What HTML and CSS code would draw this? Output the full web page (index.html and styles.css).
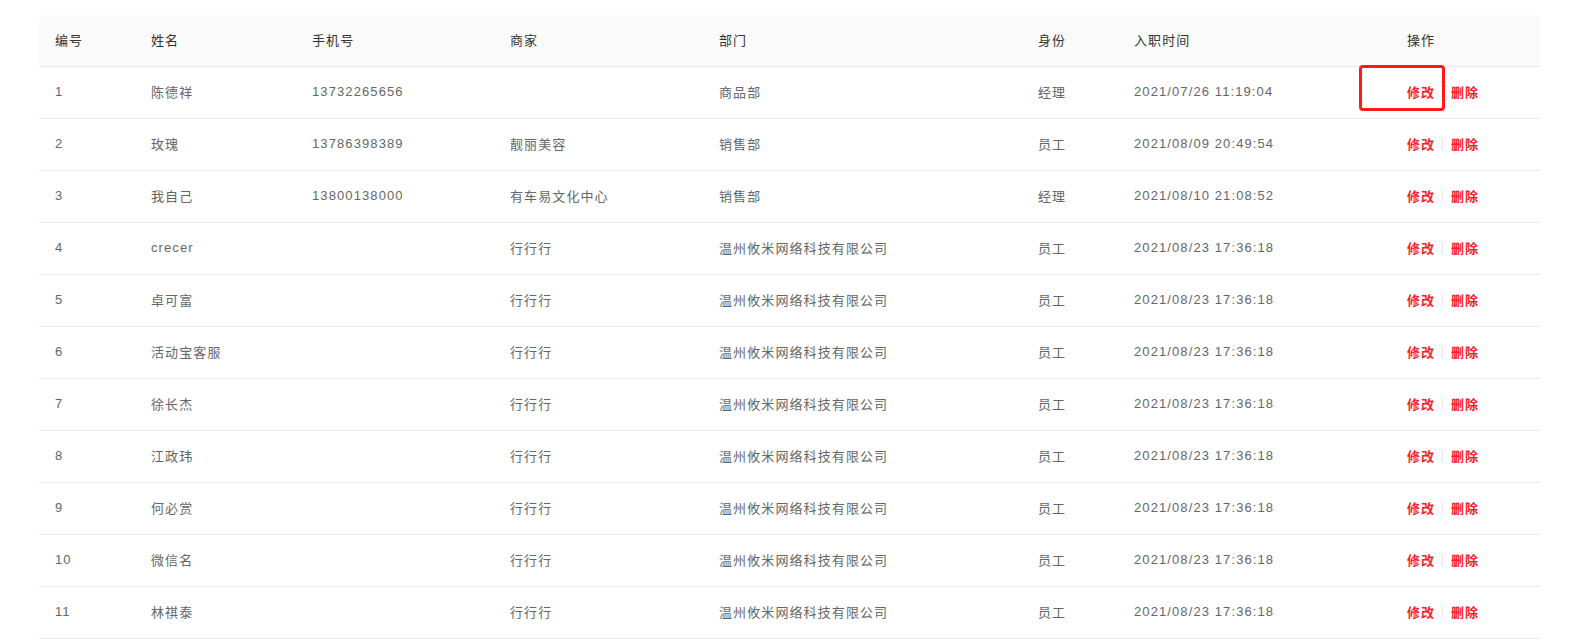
FILE: index.html
```html
<!DOCTYPE html>
<html lang="zh">
<head>
    <meta charset="UTF-8" />
    <title>员工列表</title>
    <link rel="stylesheet" href="styles.css">
</head>
<body>
    <div class="table-wrap">
        <table class="staff-table">
            <colgroup>
                <col class="c-id"><col class="c-name"><col class="c-phone"><col class="c-shop">
                <col class="c-dept"><col class="c-role"><col class="c-time"><col class="c-ops">
            </colgroup>
            <thead>
                <tr>
                    <th>编号</th><th>姓名</th><th>手机号</th><th>商家</th>
                    <th>部门</th><th>身份</th><th>入职时间</th><th>操作</th>
                </tr>
            </thead>
            <tbody id="rows"></tbody>
        </table>
        <div class="mark-box"></div>
    </div>

    <script>
    const staff = [
        ["1", "陈德祥", "13732265656", "", "商品部", "经理", "2021/07/26 11:19:04"],
        ["2", "玫瑰", "13786398389", "靓丽美容", "销售部", "员工", "2021/08/09 20:49:54"],
        ["3", "我自己", "13800138000", "有车易文化中心", "销售部", "经理", "2021/08/10 21:08:52"],
        ["4", "crecer", "", "行行行", "温州攸米网络科技有限公司", "员工", "2021/08/23 17:36:18"],
        ["5", "卓可富", "", "行行行", "温州攸米网络科技有限公司", "员工", "2021/08/23 17:36:18"],
        ["6", "活动宝客服", "", "行行行", "温州攸米网络科技有限公司", "员工", "2021/08/23 17:36:18"],
        ["7", "徐长杰", "", "行行行", "温州攸米网络科技有限公司", "员工", "2021/08/23 17:36:18"],
        ["8", "江政玮", "", "行行行", "温州攸米网络科技有限公司", "员工", "2021/08/23 17:36:18"],
        ["9", "何必赏", "", "行行行", "温州攸米网络科技有限公司", "员工", "2021/08/23 17:36:18"],
        ["10", "微信名", "", "行行行", "温州攸米网络科技有限公司", "员工", "2021/08/23 17:36:18"],
        ["11", "林祺泰", "", "行行行", "温州攸米网络科技有限公司", "员工", "2021/08/23 17:36:18"]
    ];

    const tbody = document.getElementById('rows');
    staff.forEach(function (row) {
        const tr = document.createElement('tr');
        row.forEach(function (val) {
            const td = document.createElement('td');
            td.textContent = val;
            tr.appendChild(td);
        });
        const ops = document.createElement('td');
        ops.innerHTML = '<a class="op">修改</a><span class="op-sep"></span><a class="op">删除</a>';
        tr.appendChild(ops);
        tbody.appendChild(tr);
    });
    </script>
</body>
</html>
```

FILE: styles.css
```css
* {
    margin: 0;
    padding: 0;
    box-sizing: border-box;
}
body {
    background: #fff;
    font-family: "Liberation Sans", "Noto Sans CJK SC", sans-serif;
    font-size: 13px;
    letter-spacing: 1.1px;
    color: #666;
}
.table-wrap {
    position: relative;
    padding: 15px 34px 0 39px;
}
.staff-table {
    width: 1501px;
    table-layout: fixed;
    border-collapse: separate;
    border-spacing: 0;
}
.c-id { width: 96px; }
.c-name { width: 161px; }
.c-phone { width: 198px; }
.c-shop { width: 209px; }
.c-dept { width: 319px; }
.c-role { width: 96px; }
.c-time { width: 273px; }
.c-ops { width: 149px; }

.staff-table th,
.staff-table td {
    height: 52px;
    padding: 0 16px 3px;
    text-align: left;
    vertical-align: middle;
    border-bottom: 1px solid #e8e8e8;
    white-space: nowrap;
}
.staff-table th {
    background: #fafafa;
    font-weight: normal;
    color: #333;
}
.staff-table th:first-child { border-top-left-radius: 4px; }
.staff-table th:last-child { border-top-right-radius: 4px; }

.op {
    color: #f5222d;
    font-weight: bold;
    letter-spacing: 1px;
    cursor: pointer;
}
.op-sep {
    display: inline-block;
    width: 1px;
    height: 12px;
    margin: 0 8px 0 7px;
    background: #e8e8e8;
    vertical-align: -1px;
}

/* 标注框 */
.mark-box {
    position: absolute;
    left: 1359px;
    top: 65px;
    width: 86px;
    height: 46px;
    border: 3px solid #ff1a1a;
    border-radius: 4px;
}
```
